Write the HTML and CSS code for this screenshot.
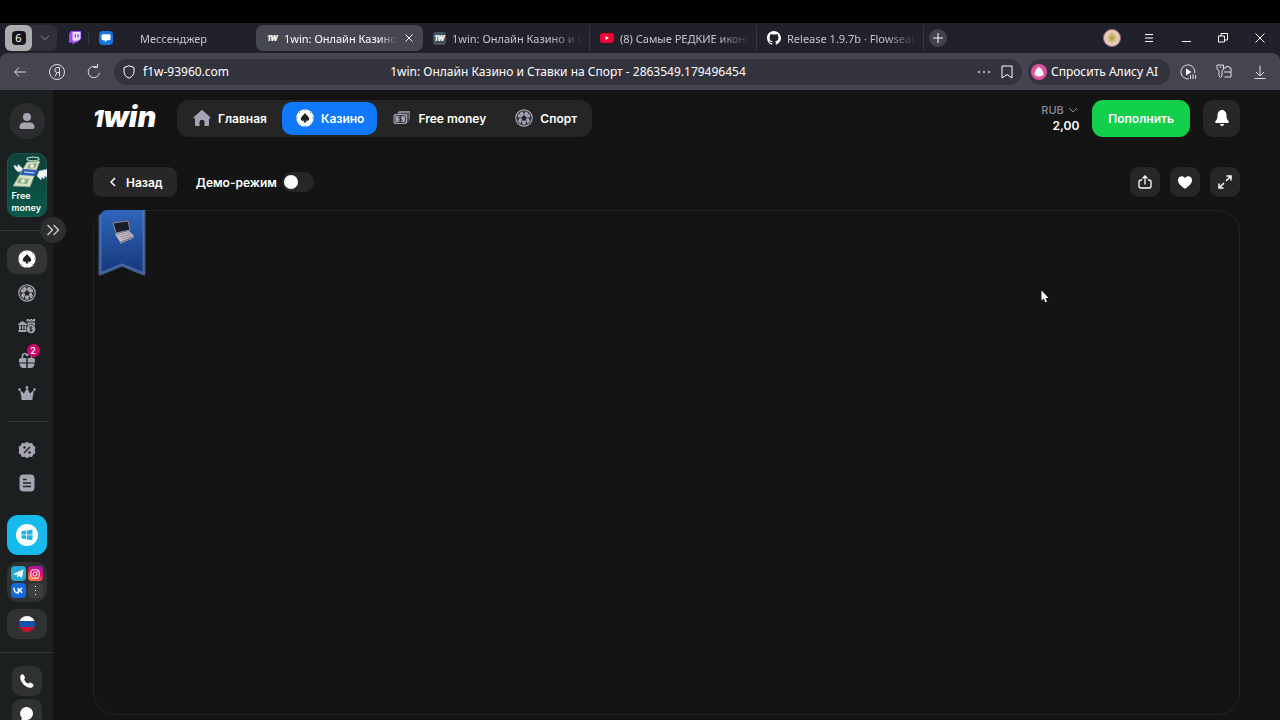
FILE: index.html
```
<!DOCTYPE html>
<html lang="ru">
<head>
<meta charset="UTF-8">
<title>1win: Онлайн Казино и Ставки на Спорт</title>
<link rel="stylesheet" href="styles.css">
</head>
<body>
<svg class="sprite" aria-hidden="true">
    <symbol id="chip" viewBox="0 0 18 18">
        <circle cx="9" cy="9" r="8.7"/>
        <path d="M9 0v2M9 16v2M0 9h2M16 9h2M2.600 2.600l1.500 1.500M13.900 13.900l1.500 1.500M2.600 15.400l1.500-1.500M13.900 4.100l1.500-1.500" class="chip-cut"/>
        <path d="M9 4c1.200 2 4.200 3.500 4.200 5.800 0 2-2.200 2.700-3.500 1.500l.8 2.200h-3l.8-2.200c-1.300 1.200-3.500.5-3.500-1.500C4.800 7.500 7.800 6 9 4z" class="chip-spade"/>
    </symbol>
    <symbol id="ball" viewBox="0 0 18 18">
        <circle cx="9" cy="9" r="8.200" fill="none" stroke="currentColor" stroke-width="1.200"/>
        <circle cx="9" cy="9" r="6.700" fill="currentColor"/>
        <path d="M9 6.300l2.700 2-1 3.100H7.300l-1-3.100zM6.800 2.400h4.400L9 4.200zM2.300 7.500l2 1.300-.8 2.600-1.300-1zM15.700 7.500l-2 1.300.8 2.600 1.300-1zM5.200 14.200l1.700-1.400 1 2.600zM12.800 14.200l-1.700-1.400-1 2.600z" fill="#242526"/>
        <path d="M9 4v2.500M4 8.500l2.500.5M14 8.500l-2.500.5M7.300 11l-.8 2M10.700 11l.8 2M4 4l1.300 1.500M14 4l-1.300 1.500" stroke="#242526" stroke-width=".6"/>
    </symbol>
</svg>

<div class="browser">
    <div class="tabs">
        <div class="group">
            <button class="count" aria-label="Вкладки"><span>6</span></button>
            <button class="group-more" aria-label="Группы"><svg width="10" height="6" viewBox="0 0 10 6"><path d="M1 1l4 3.500L9 1" class="line"/></svg></button>
        </div>
        <a class="pinned" href="#" aria-label="Twitch">
            <svg width="13" height="14" viewBox="0 0 13 14"><path d="M2 0h10v8L8 11.500H6L3.500 14v-2.500H0V3z" fill="#9b4dff"/><path d="M3.500 1h8v6.500l-2 2h-2l-2 1.800V9.500h-2z" fill="#e8dcff"/><path d="M6.300 3.200v3M9 3.200v3" stroke="#7b35d8" stroke-width="1.200"/></svg>
        </a>
        <a class="tab messenger" href="#">
            <svg width="14" height="14" viewBox="0 0 14 14"><rect width="14" height="14" rx="4" fill="#1674e0"/><path d="M4 3.200h6c1 0 1.500.5 1.500 1.500v3c0 1-.5 1.500-1.500 1.500H8l-2.200 2V9.200H4c-1 0-1.500-.5-1.500-1.500v-3c0-1 .5-1.500 1.500-1.500z" fill="#fff"/></svg>
            <span>Мессенджер</span>
        </a>
        <a class="tab active" href="#">
            <b class="fav">1W</b>
            <span>1win: Онлайн Казино и</span>
            <button aria-label="Закрыть вкладку"><svg width="8" height="8" viewBox="0 0 8 8"><path d="M.5.5l7 7M7.500.5l-7 7" class="line"/></svg></button>
        </a>
        <a class="tab ruled" href="#">
            <b class="fav">1W</b>
            <span>1win: Онлайн Казино и Ст</span>
        </a>
        <a class="tab ruled" href="#">
            <svg width="14" height="14" viewBox="0 0 14 14"><rect y="2" width="14" height="10" rx="3" fill="#f00033"/><path d="M5.500 5v4L9 7z" fill="#fff"/></svg>
            <span>(8) Самые РЕДКИЕ иконк</span>
        </a>
        <a class="tab ruled" href="#">
            <svg width="14" height="14" viewBox="0 0 16 16"><path fill="#fff" d="M8 0C3.580 0 0 3.580 0 8c0 3.540 2.290 6.530 5.470 7.590.4.070.55-.17.55-.38v-1.490c-2.010.37-2.530-.49-2.690-.94-.09-.23-.48-.94-.82-1.130-.28-.15-.68-.52-.01-.53.63-.01 1.080.58 1.230.82.72 1.210 1.870.87 2.330.66.070-.52.28-.87.51-1.070-1.780-.2-3.640-.89-3.640-3.950 0-.87.310-1.590.82-2.150-.08-.2-.36-1.020.08-2.120 0 0 .67-.21 2.200.82A7.600 7.600 0 0 1 8 3.860c.68 0 1.360.09 2 .27 1.530-1.040 2.200-.82 2.200-.82.440 1.100.160 1.920.080 2.120.510.560.820 1.270.820 2.150 0 3.070-1.870 3.750-3.650 3.950.290.250.540.730.540 1.480v2.200c0 .210.150.460.550.380A8 8 0 0 0 8 0z"/></svg>
            <span>Release 1.9.7b · Flowseal/z</span>
        </a>
        <button class="new-tab" aria-label="Новая вкладка"><svg width="10" height="10" viewBox="0 0 10 10"><path d="M5 0v10M0 5h10" class="line"/></svg></button>
        <div class="window">
            <button aria-label="Профиль"><svg width="18" height="18" viewBox="0 0 18 18"><circle cx="9" cy="9" r="8.500" fill="#e2cdb5" stroke="#a56a80"/><path d="M9 4v10M4.500 9h9M6 6l6 6M12 6l-6 6" stroke="#b7a442" stroke-width="1.200"/></svg></button>
            <button aria-label="Меню"><svg width="10" height="10" viewBox="0 0 10 10"><path d="M1 1.500h8M1 5h8M1 8.500h8" class="line"/></svg></button>
            <button aria-label="Свернуть"><svg width="10" height="10" viewBox="0 0 10 10"><path d="M1 8.500h9" class="line"/></svg></button>
            <button aria-label="Окно"><svg width="10" height="10" viewBox="0 0 10 10"><path d="M.5 3h6v6h-6zM3 3V.5h6.500V7h-3" class="line"/></svg></button>
            <button aria-label="Закрыть"><svg width="10" height="10" viewBox="0 0 10 10"><path d="M.5.5l9 9M9.500.5l-9 9" class="line"/></svg></button>
        </div>
    </div>

    <div class="toolbar">
        <div class="history">
            <button aria-label="Назад"><svg width="14" height="14" viewBox="0 0 14 14"><path d="M13 7H2M6 2.500L1.500 7 6 11.500" class="line"/></svg></button>
            <button aria-label="Яндекс"><svg width="16" height="16" viewBox="0 0 16 16"><circle cx="8" cy="8" r="7.500" class="line"/><path d="M10.500 12.500v-9H8.300a2.500 2.500 0 0 0 0 5h2.200M8.300 8.500l-2.600 4" class="line"/></svg></button>
            <button aria-label="Обновить"><svg width="14" height="16" viewBox="0 0 14 16"><path d="M10 3.200A5.700 5.700 0 1 0 12.500 9M6.500 3.500h4V0" class="line"/></svg></button>
        </div>
        <div class="address">
            <div class="address-site">
                <svg width="12" height="14" viewBox="0 0 12 14"><path d="M6 .8l5 1.700v4C11 9.500 9 12 6 13.200 3 12 1 9.500 1 6.500v-4z" class="line"/></svg>
                <input type="text" value="f1w-93960.com" aria-label="Адрес">
            </div>
            <span class="page-title">1win: Онлайн Казино и Ставки на Спорт - 2863549.179496454</span>
            <div class="address-tools">
                <button aria-label="Ещё"><svg width="14" height="4" viewBox="0 0 14 4"><g fill="#aaaab2"><circle cx="2" cy="2" r="1.200"/><circle cx="7" cy="2" r="1.200"/><circle cx="12" cy="2" r="1.200"/></g></svg></button>
                <button aria-label="В закладки"><svg width="12" height="14" viewBox="0 0 12 14"><path d="M1 1h10v12L6 9.500 1 13z" class="line"/></svg></button>
            </div>
        </div>
        <button class="alice"><svg width="16" height="16" viewBox="0 0 16 16"><circle cx="8" cy="8" r="8" fill="#e0529c"/><path d="M8 3c1.600 0 4.500 4.800 4.500 6.800S10.500 12.500 8 12.500s-4.500-.7-4.500-2.700S6.400 3 8 3z" fill="#fff"/></svg>Спросить Алису AI</button>
        <div class="extras">
            <button aria-label="Плеер"><svg width="17" height="16" viewBox="0 0 17 16"><path d="M9 14.800A7 7 0 1 1 14.800 9" class="line"/><path d="M6 4.500v7L11.500 8z" fill="#fff"/><path d="M10.500 11v4M13 10v5M15.500 11v4" class="line"/></svg></button>
            <button aria-label="Пароли"><svg width="16" height="15" viewBox="0 0 16 15"><path d="M1 1h6.500v4.500L6 6.500V12l-1.500 1.500L3 12V6.500L1 5zM3.500 3h2M8 4h1.500L10 2.500h3L13.500 4H15v9H8.500M8 8h7" class="line"/></svg></button>
            <button aria-label="Загрузки"><svg width="12" height="14" viewBox="0 0 12 14"><path d="M6 .5v10M2 7l4 4 4-4M.5 13.500h11" class="line"/></svg></button>
        </div>
    </div>
</div>

<div class="site">
    <aside class="sidebar">
        <a class="avatar" href="#" aria-label="Профиль"><svg width="16" height="18" viewBox="0 0 16 18"><circle cx="8" cy="5" r="4"/><path d="M.5 15c0-3 2-4.500 4.500-4.500h6c2.500 0 4.500 1.500 4.500 4.500 0 1.300-.7 2-2 2h-11c-1.300 0-2-.7-2-2z"/></svg></a>
        <a class="promo" href="#">
            <svg width="36" height="34" viewBox="0 0 36 34">
                <ellipse cx="21" cy="3" rx="6" ry="1.800" fill="none" stroke="#a9d6cf" stroke-width="1.300"/>
                <path d="M7 16C4 15 2 12 2 9l4 2V8l6 6zM25 20l2-5 9-2v9l-3-2-1 3-2-2-1 3z" fill="#e9f3f8" stroke="#a8c2d8" stroke-width=".5"/>
                <path d="M15 6l13-1-10 26-17-1z" fill="#d7e0c4" stroke="#7e9a79" stroke-width=".7"/>
                <path d="M17 8l8-1-2 5-8 1zM7 22l10 1-2 5-10-1z" fill="#8fab83"/>
                <circle cx="20" cy="10" r="2" fill="#e4ecd7"/><circle cx="11" cy="25" r="2" fill="#e4ecd7"/>
                <path d="M11 13l15 1-3 6-15-1z" fill="#2f5cb5"/><path d="M12 16l10 1" stroke="#d6e6ff"/>
            </svg>
            Free<br>money
        </a>
        <div class="divider wide"><button class="expand" aria-label="Развернуть меню"><svg width="14" height="12" viewBox="0 0 14 12"><path d="M1.500 1l5 5-5 5M7.500 1l5 5-5 5" fill="none" stroke="currentColor" stroke-width="1.500"/></svg></button></div>
        <nav class="menu">
            <a class="current" href="#" aria-label="Казино"><svg width="18" height="18"><use href="#chip"/></svg></a>
            <a href="#" aria-label="Спорт"><svg width="18" height="18"><use href="#ball"/></svg></a>
            <a href="#" aria-label="Ставки"><svg width="18" height="16" viewBox="0 0 18 16"><path d="M0 6l4.500-3L9 6v1H0zM1 7.500h2v4H1zM4 7.500h1.500v4H4zM6.500 7.500h1.800v4H6.500zM.5 12h8v2h-8zM8 3.500L9 1h8.500l-.5 2.500zM9.500 4.500H17V8a4.500 4.500 0 0 0-7.500 0z"/><circle cx="13" cy="11" r="4.300"/><path d="M14.500 9.500c-1.500-1-3-.5-3 .4 0 1.500 3 .6 3 2.100 0 1-2 1.200-3.200.3M13 8v6M10.500 2.500l2-2M13.500 2.500l2-2" fill="none" stroke="#1e2021" stroke-width=".8"/></svg></a>
            <a href="#" aria-label="Бонусы"><svg width="18" height="18" viewBox="0 0 18 18"><path d="M1 9c0-1.200.8-2 2-2h5.300v4.500H1zM9.700 7H15c1.200 0 2 .8 2 2v2.500H9.700zM1.500 12.500h6.800V17H5.500c-2.500 0-4-1.800-4-4.500zM9.700 12.500h6.800c0 2.700-1.500 4.500-4 4.500H9.700z"/><path d="M4.500 7c-1-5 3.500-6 4.500-2 1-4 5.500-3 4.500 2" fill="none" stroke="currentColor" stroke-width="1.500"/></svg><i class="badge">2</i></a>
            <a href="#" aria-label="VIP"><svg width="18" height="15" viewBox="0 0 18 15"><path d="M2 4l4 3.500L9 2l3 5.500L16 4l-1.500 8h-11zM3.500 12h11v2h-11z"/><circle cx="1.500" cy="3.500" r="1.300"/><circle cx="9" cy="1.500" r="1.400"/><circle cx="16.500" cy="3.500" r="1.300"/></svg></a>
        </nav>
        <div class="divider"></div>
        <nav class="menu short">
            <a href="#" aria-label="Акции"><svg width="18" height="18" viewBox="0 0 18 18"><path d="M9 .7l2.300 1.500 2.800-.2 1.200 2.500 2.100 1.600-.6 2.900.6 2.900-2.100 1.600-1.200 2.500-2.800-.2L9 17.300l-2.300-1.500-2.800.2-1.200-2.500-2.100-1.600L1.200 9 .6 6.100l2.100-1.600L3.900 2l2.800.2z"/><path d="M6 12l6-6" stroke="#1e2021" stroke-width="1.500"/><circle cx="6.500" cy="6.500" r="1.200" fill="#1e2021"/><circle cx="11.500" cy="11.500" r="1.200" fill="#1e2021"/></svg></a>
            <a href="#" aria-label="Правила"><svg width="16" height="18" viewBox="0 0 16 18"><rect x=".5" y=".5" width="15" height="17" rx="4"/><path d="M4 5.500h3.500M4 9h8M4 12.500h8" stroke="#1e2021" stroke-width="1.500"/></svg></a>
        </nav>
        <a class="windows" href="#" aria-label="Приложение для Windows"><svg width="22" height="22" viewBox="0 0 22 22"><circle cx="11" cy="11" r="11" fill="#fff"/><path d="M5.500 7.200l4.700-.7v4H5.500zM11 6.400l5.500-.8v4.900H11zM5.500 11.300h4.700v4l-4.700-.7zM11 11.300h5.500v4.900l-5.500-.8z" fill="#1ab4e6"/></svg></a>
        <div class="socials">
            <a class="telegram" href="#" aria-label="Telegram"><svg width="11" height="10" viewBox="0 0 11 10"><path d="M0 5l10.500-4.500L9 9 5.500 7 4 8.500V6.300L8 3 3 5.900z"/></svg></a>
            <a class="instagram" href="#" aria-label="Instagram"><svg width="10" height="10" viewBox="0 0 10 10"><rect x=".8" y=".8" width="8.400" height="8.400" rx="2.300" class="line"/><circle cx="5" cy="5" r="2" class="line"/><circle cx="7.400" cy="2.600" r=".6"/></svg></a>
            <a class="vk" href="#" aria-label="VK"><svg width="10" height="7" viewBox="0 0 10 7"><path d="M.8.8C1 4 2.600 6 5.300 6V.8M9 .8C8.500 2.200 7 3.100 5.500 3.200 7 3.400 8.500 4.500 9 6" fill="none" stroke="#fff" stroke-width="1.500"/></svg></a>
            <button aria-label="Ещё"><svg width="3" height="9" viewBox="0 0 3 9"><path d="M1 0h1v1H1zM1 4h1v1H1zM1 8h1v1H1z"/></svg></button>
        </div>
        <button class="language" aria-label="Русский"><i class="flag"></i></button>
        <div class="divider wide"></div>
        <div class="contacts">
            <a href="#" aria-label="Позвонить"><svg width="16" height="16" viewBox="0 0 16 16"><path d="M1.300 3.200C2 1.500 3.500.8 4.500 1.800l1.300 2c.8 1.200-.8 2-.5 3 .5 1.500 2 3 3.600 3.600 1.100.3 1.800-1.300 3-.6l2 1.300c1.500 1.200.3 3.200-1.600 3.600C7 15.500.3 8.500 1.300 3.200z"/></svg></a>
            <a href="#" aria-label="Чат"><svg width="16" height="16" viewBox="0 0 16 16"><path d="M8 1a6.500 6.500 0 1 1-1 13l-5 1 1-3A6.500 6.500 0 0 1 8 1z"/></svg></a>
        </div>
    </aside>

    <main>
        <header>
            <a class="logo" href="#"><span>1</span>win</a>
            <nav class="sections">
                <a href="#"><svg width="18" height="18" viewBox="0 0 18 18"><path d="M9 .7l8.300 7.500c.5.600.2 1.300-.6 1.300H16v6c0 1-.5 1.500-1.500 1.500h-3v-4c0-3-5-3-5 0v4h-3c-1 0-1.500-.5-1.500-1.500v-6h-.7C.5 9.500.2 8.800.7 8.200z"/></svg>Главная</a>
                <a class="current" href="#"><svg width="18" height="18"><use href="#chip"/></svg>Казино</a>
                <a href="#"><svg width="18" height="16" viewBox="0 0 18 16"><path d="M4 3.500L6 1h11v7.500L14.500 13V4.500z" opacity=".75"/><path d="M8 3.500h8M15.800 4v7" stroke="#252525" stroke-width=".7"/><rect x=".5" y="4" width="13.500" height="10" rx="2"/><rect x="2" y="5.500" width="10.500" height="7" rx="1.500" fill="none" stroke="#252525" stroke-width=".8"/><path d="M9 7.200c-1.700-1-3.500-.5-3.500.5 0 1.500 3.500.9 3.500 2.500 0 1.200-2.300 1.300-3.700.3M7.300 5.800v6.500" fill="none" stroke="#252525" stroke-width=".9"/></svg>Free money</a>
                <a href="#"><svg width="18" height="18"><use href="#ball"/></svg>Спорт</a>
            </nav>
            <div class="balance">
                <label><select aria-label="Валюта"><option>RUB</option></select><svg width="10" height="6" viewBox="0 0 10 6"><path d="M1 1l4 4 4-4" class="line"/></svg></label>
                <strong>2,00</strong>
            </div>
            <button class="deposit">Пополнить</button>
            <button class="bell" aria-label="Уведомления"><svg width="16" height="18" viewBox="0 0 16 18"><path d="M8 .8c3 .4 4.500 2.700 4.500 5.700 0 3 .7 4.200 2 5.500.8 1 .3 2-1 2h-11c-1.300 0-1.800-1-1-2 1.300-1.300 2-2.500 2-5.500 0-3 1.500-5.300 4.500-5.700zM6 15h4c0 2.600-4 2.600-4 0z"/></svg></button>
        </header>

        <div class="game-bar">
            <button class="back"><svg width="6" height="10" viewBox="0 0 6 10"><path d="M5 1L1 5l4 4" fill="none" stroke="#fff" stroke-width="1.500"/></svg>Назад</button>
            <label class="demo">Демо-режим<input type="checkbox"></label>
            <div class="game-tools">
                <button aria-label="Поделиться"><svg width="14" height="14" viewBox="0 0 14 14"><path d="M4 5H3C1.800 5 1 5.800 1 7v4c0 1.200.8 2 2 2h8c1.200 0 2-.8 2-2V7c0-1.200-.8-2-2-2h-1M7 9.500V1M4.500 3.500L7 1l2.500 2.500" fill="none" stroke="#fff" stroke-width="1.300"/></svg></button>
                <button aria-label="В избранное"><svg width="14" height="13" viewBox="0 0 14 13"><path d="M7 12.800C3 10.300 0 7.500 0 4 0 .3 4.500-1.200 7 2c2.500-3.200 7-1.700 7 2 0 3.500-3 6.300-7 8.800z" fill="#fff"/></svg></button>
                <button aria-label="На весь экран"><svg width="14" height="14" viewBox="0 0 14 14"><path d="M8 6l5-5M8.500 1H13v4.500M6 8l-5 5M1 8.500V13h4.500" fill="none" stroke="#fff" stroke-width="1.500"/></svg></button>
            </div>
        </div>

        <section class="game">
            <svg class="ribbon" width="48" height="66" viewBox="0 0 48 66">
                <defs><linearGradient id="blue" x1="0" y1="0" x2="0" y2="1"><stop offset="0" stop-color="#2f66bd"/><stop offset="1" stop-color="#173779"/></linearGradient></defs>
                <path d="M2 4.500C4 2 6 0 9 0h37v64L24 55 2 64z" fill="url(#blue)"/>
                <path d="M2 5v59L24 55l22 9V0" fill="none" stroke="#567bb9" stroke-width="3" stroke-linejoin="round" opacity=".7"/>
                <path d="M15 13l15-2 2 9-14 3z" fill="#191b25" stroke="#8d8990"/>
                <path d="M17 24l14-3 5 5-14 6z" fill="#c6bdc5"/><path d="M19 25l12-2.500M21 27l12-3M23 29l10-3" stroke="#81798b" stroke-width=".7"/>
                <path d="M22 32v2l14-6v-2z" fill="#8f8795"/>
            </svg>
        </section>
    </main>
</div>
<svg class="cursor" width="8" height="13" viewBox="0 0 8 13"><path d="M.5.5v10l2.300-2 1.500 3.700 1.700-.7L4.500 8H7.500z" fill="#fff"/></svg>
</body>
</html>
```

FILE: styles.css
```
* {
    box-sizing: border-box;
}

body {
    display: flex;
    flex-direction: column;
    height: 100vh;
    margin: 0;
    padding-top: 23px;
    background: #000;
    color: #fff;
    font-family: Inter, "Liberation Sans", sans-serif;
    font-size: 12px;
    font-weight: 600;
    overflow: hidden;
}

a {
    color: inherit;
    text-decoration: none;
}

button, input, select {
    margin: 0;
    padding: 0;
    border: none;
    background: none;
    color: inherit;
    font: inherit;
}

button {
    display: flex;
    align-items: center;
    justify-content: center;
    cursor: pointer;
}

svg {
    display: block;
    flex: none;
    fill: currentColor;
}

.sprite {
    position: absolute;
    width: 0;
    height: 0;
}

.line {
    fill: none;
    stroke: currentColor;
}

/* browser window */
.browser {
    background: #21212b;
    font-family: "Noto Sans", sans-serif;
    font-weight: 400;
}

.tabs {
    display: flex;
    align-items: center;
    height: 30px;
    padding: 0 8px 0 5px;
    color: #c5c5cc;
    font-size: 11px;
}

.group {
    display: flex;
    width: 52px;
    height: 26px;
    border-radius: 6px;
    background: #30303a;
}

.count {
    width: 27px;
    border-radius: 6px;
    background: #adadb0;
}

.count span {
    width: 14px;
    border-radius: 4px;
    background: #17171b;
    color: #fff;
    line-height: 14px;
}

.group-more {
    flex: 1;
    color: #85858e;
}

.pinned {
    display: flex;
    justify-content: center;
    width: 32px;
    padding-left: 6px;
    border-right: 1px solid #373741;
}

.tab {
    display: flex;
    align-items: center;
    flex: 0 1 167px;
    min-width: 0;
    height: 26px;
    padding: 0 6px 0 10px;
    border-radius: 7px;
    gap: 6px;
}

.tab.ruled {
    border-right: 1px solid #373741;
    border-radius: 0;
}

.tab span {
    flex: 1;
    overflow: hidden;
    white-space: nowrap;
    mask-image: linear-gradient(to right, #000 75%, transparent);
}

.tab.messenger {
    gap: 27px;
}

.tab.active {
    background: #474751;
    color: #fff;
    gap: 5px;
}

.tab.active .fav {
    background: none;
}

.tab.active span {
    mask-image: linear-gradient(to right, #000 85%, transparent);
}

.tab button {
    width: 16px;
    height: 16px;
}

.fav {
    width: 13px;
    border-radius: 3px;
    background: #44515e;
    color: #fff;
    font: italic 900 7px/13px Inter, sans-serif;
    text-align: center;
}

.new-tab {
    width: 18px;
    height: 18px;
    margin-left: 5px;
    border-radius: 50%;
    background: #42424c;
    color: #fff;
}

.window {
    display: flex;
    gap: 13px;
    margin-left: auto;
    color: #fff;
}

.window button {
    width: 24px;
    height: 24px;
}

.toolbar {
    display: flex;
    align-items: center;
    height: 37px;
    padding: 0 8px;
    border-radius: 8px 8px 0 0;
    background: #454550;
    color: #e0e0e4;
}

.history {
    display: flex;
    gap: 13px;
    margin-right: 8px;
}

.history button, .extras button {
    width: 24px;
    height: 24px;
}

.address {
    display: flex;
    align-items: center;
    flex: 1;
    height: 26px;
    padding: 0 9px;
    border-radius: 13px;
    background: #33333d;
    color: #fff;
}

.address-site {
    display: flex;
    align-items: center;
    flex: 1;
    gap: 8px;
}

.address input {
    flex: 1;
    min-width: 0;
    outline: none;
}

.page-title {
    white-space: nowrap;
}

.address-tools {
    display: flex;
    align-items: center;
    justify-content: flex-end;
    flex: 1;
    gap: 10px;
}

.alice {
    height: 26px;
    margin: 0 6px;
    padding: 0 12px 0 3px;
    border-radius: 13px;
    background: #33333d;
    color: #fff;
    gap: 4px;
}

.extras {
    display: flex;
    gap: 12px;
}

/* site */
.site {
    display: flex;
    flex: 1;
    min-height: 0;
    background: #141414;
}

.sidebar {
    display: flex;
    flex-direction: column;
    align-items: center;
    flex: none;
    width: 53px;
    padding-top: 13px;
    background: #1c1f20;
    color: #a6a6b2;
}

.sidebar > * {
    flex: none;
}

.avatar {
    display: flex;
    align-items: center;
    justify-content: center;
    width: 36px;
    height: 36px;
    margin-bottom: 14px;
    border-radius: 50%;
    background: #2b2c2d;
}

.promo {
    width: 40px;
    height: 64px;
    padding: 3px 0 0 5px;
    border-radius: 10px;
    background: linear-gradient(#114039, #07594b);
    box-shadow: inset 0 0 0 1px #17574c;
    color: #fff;
    font-size: 9px;
    line-height: 12px;
    overflow: hidden;
}

.divider {
    width: 40px;
    height: 1px;
    margin: 13px 0;
    background: #36383a;
}

.divider.wide {
    position: relative;
    width: 100%;
}

.expand {
    position: absolute;
    top: -13px;
    right: -13px;
    width: 26px;
    height: 26px;
    border-radius: 50%;
    background: #2d2e30;
    color: #c5c5c8;
}

.menu {
    display: flex;
    flex-direction: column;
    justify-content: space-between;
    min-height: 164px;
}

.menu.short {
    min-height: 0;
    gap: 3px;
}

.menu a {
    display: flex;
    position: relative;
    align-items: center;
    justify-content: center;
    width: 40px;
    height: 30px;
    border-radius: 9px;
}

.menu .current {
    background: #333435;
    color: #fff;
}

.chip-cut {
    stroke: #8f9499;
    stroke-width: 1;
}

.chip-spade {
    fill: #222;
}

.badge {
    position: absolute;
    top: -1px;
    right: 7px;
    width: 13px;
    border-radius: 7px;
    background: #d6006c;
    color: #fff;
    font-size: 9px;
    font-style: normal;
    line-height: 13px;
    text-align: center;
}

.windows {
    display: flex;
    align-items: center;
    justify-content: center;
    width: 40px;
    height: 40px;
    margin: 17px 0 7px;
    border-radius: 11px;
    background: #16baed;
}

.socials {
    display: grid;
    grid-template-columns: 15px 15px;
    grid-auto-rows: 15px;
    place-content: center;
    gap: 2px;
    width: 40px;
    height: 40px;
    margin-bottom: 7px;
    border-radius: 11px;
    background: #2f3132;
    color: #fff;
}

.socials a, .socials button {
    display: flex;
    align-items: center;
    justify-content: center;
    border-radius: 4px;
    background: #3d3e40;
}

.socials .telegram {
    background: #24a8d4;
}

.socials .instagram {
    background: linear-gradient(20deg, #ff9e20, #e7145f 50%, #9415c2);
}

.socials .vk {
    background: #126bdc;
}

.language {
    width: 40px;
    height: 30px;
    border-radius: 9px;
    background: #2f3132;
}

.flag {
    width: 16px;
    height: 16px;
    border-radius: 50%;
    background: linear-gradient(#fff 33%, #1450ad 33% 67%, #cb1030 67%);
}

.contacts {
    display: grid;
    gap: 3px;
}

.contacts a {
    display: flex;
    align-items: center;
    justify-content: center;
    width: 30px;
    height: 30px;
    border-radius: 9px;
    background: #2f3132;
    color: #fff;
}

main {
    display: flex;
    flex-direction: column;
    flex: 1;
    min-width: 0;
    padding: 9px 40px 5px;
}

header {
    display: flex;
    align-items: center;
}

.logo {
    width: 63px;
    margin-right: 21px;
    font-size: 29px;
    font-style: italic;
    font-weight: 900;
    line-height: 36px;
}

.logo span {
    font-size: 23px;
}

.sections {
    display: flex;
    padding: 2px;
    border-radius: 12px;
    background: #252525;
    gap: 2px;
}

.sections a {
    display: flex;
    align-items: center;
    height: 33px;
    padding: 0 13px 0 14px;
    border-radius: 10px;
    gap: 7px;
}

.sections svg {
    color: #a3a3b5;
}

.sections .current {
    background: #0f78fb;
}

.sections .current svg {
    color: #fff;
}

.sections .chip-spade {
    fill: #0f78fb;
}

.balance {
    display: flex;
    flex-direction: column;
    align-items: flex-end;
    margin: 0 13px 0 auto;
    line-height: 16px;
}

.balance label {
    display: flex;
    align-items: center;
    padding-right: 1px;
    color: #858b98;
    font-size: 11px;
    font-weight: 500;
    gap: 4px;
}

.balance select {
    appearance: none;
}

.balance strong {
    font-weight: 600;
}

.deposit {
    height: 37px;
    padding: 0 16px;
    border-radius: 11px;
    background: #12cf4c;
}

.bell {
    width: 37px;
    height: 37px;
    margin-left: 13px;
    border-radius: 10px;
    background: #272727;
}

.game-bar {
    display: flex;
    align-items: center;
    margin: 30px 0 13px;
}

.back {
    height: 30px;
    margin-right: 19px;
    padding: 0 14px 0 17px;
    border-radius: 9px;
    background: #272727;
    gap: 10px;
}

.demo {
    display: flex;
    align-items: center;
    gap: 5px;
}

.demo input {
    appearance: none;
    width: 32px;
    height: 20px;
    padding: 3px 2px;
    border-radius: 10px;
    background: #272727;
}

.demo input::before {
    content: "";
    display: block;
    width: 14px;
    height: 14px;
    border-radius: 50%;
    background: #fff;
}

.demo input:checked::before {
    margin-left: auto;
}

.game-tools {
    display: flex;
    gap: 10px;
    margin-left: auto;
}

.game-tools button {
    width: 30px;
    height: 30px;
    border-radius: 9px;
    background: #272727;
}

.game {
    position: relative;
    flex: 1;
    border: 1px solid #252525;
    border-radius: 22px;
}

.ribbon {
    position: absolute;
    top: -1px;
    left: 4px;
}

.cursor {
    position: absolute;
    top: 290px;
    left: 1041px;
}
```
